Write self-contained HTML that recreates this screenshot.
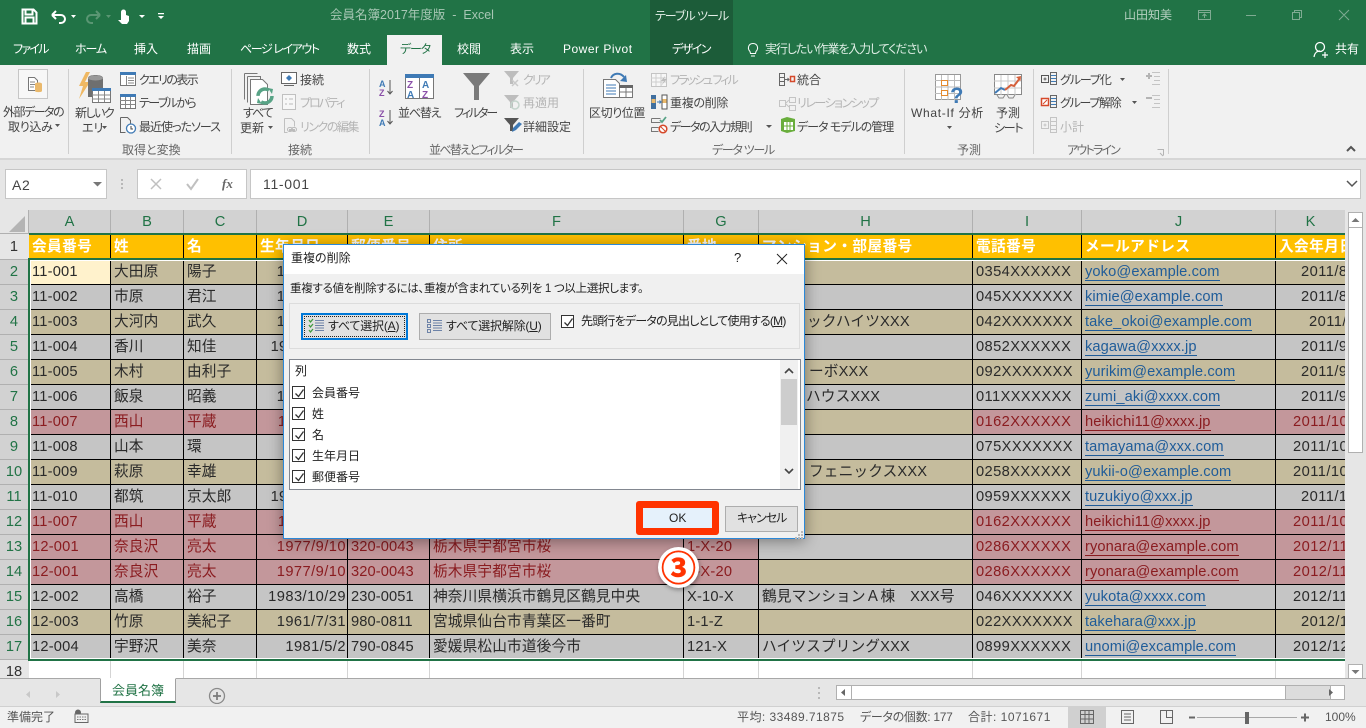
<!DOCTYPE html>
<html lang="ja"><head><meta charset="utf-8"><title>会員名簿2017年度版 - Excel</title>
<style>
*{box-sizing:border-box}
html,body{margin:0;padding:0}
body{position:relative;width:1366px;height:728px;overflow:hidden;background:#e6e6e6;font-family:"Liberation Sans","Noto Sans CJK JP",sans-serif;font-size:12px;color:#444}
.a{position:absolute}
.t{position:absolute;white-space:nowrap;line-height:16px;height:16px;font-feature-settings:"palt";font-family:"Liberation Sans","Noto Sans CJK JP",sans-serif}
.w{color:#fff}.d{color:#b4b4b4}.g2{color:#666}
.tab{color:#fff;top:41px}
.rb{color:#444}
#grid{position:absolute;left:29px;top:234px;width:1316px;height:445px;overflow:hidden;background:#fff}
table{position:absolute;left:0;top:1px;border-collapse:separate;border-spacing:0;table-layout:fixed;width:1346px;font-size:14.67px;color:#2a2a2a}
td{height:25px;padding:0 0 0 3px;border-right:1px solid #000;border-bottom:1px solid #000;white-space:nowrap;overflow:hidden;letter-spacing:.2px;line-height:24px}
td:nth-child(5){letter-spacing:.1px}
td:nth-child(9){letter-spacing:.4px}
td:nth-child(10){letter-spacing:.1px}
td:nth-child(11){letter-spacing:.45px}
tr.y td{background:#c5bc9d}tr.n td{background:#c5c5c5}
tr.h td{background:#ffc000;color:#fff;font-weight:bold;letter-spacing:.4px;padding-left:3px}
td.c{letter-spacing:.15px}
td.r{text-align:right;padding-right:1px;padding-left:0;letter-spacing:.45px}
tr td.p{background:#c3979b;color:#8a1c20}
td.l{color:#1f5c99}td.l span{border-bottom:1px solid #1f5c99}
td.p.l{color:#8a1c20}td.p.l span{border-bottom-color:#8a1c20}
tr.e td{background:#fff;border-color:#d4d4d4;height:20px}
.ch{position:absolute;top:210px;height:24px;background:#d2d2d2;border-right:1px solid #b0b0b0;color:#217346;font-size:14.67px;text-align:center;line-height:24px}
.rh{position:absolute;left:0;width:28px;height:25px;background:#d2d2d2;border-bottom:1px solid #b0b0b0;color:#217346;font-size:14.67px;text-align:center;line-height:24px}
.gl{position:absolute;background:#217346}
.wl{position:absolute;background:#fff}
#dlg{position:absolute;left:283px;top:244px;width:522px;height:295px;background:#f0f0f0;border:1px solid #2b88d8;box-shadow:0 2px 14px rgba(0,0,0,.4);color:#222}
#dlg .t{color:#222}
.cb{position:absolute;width:13px;height:13px;background:#fff;border:1px solid #333}
.cb svg{position:absolute;left:1px;top:1px}
</style></head><body>

<!-- title bar and tabs -->
<div class="a" style="left:0;top:0;width:1366px;height:65px;background:#217346"></div>
<div class="a" style="left:650px;top:0;width:83px;height:65px;background:#1c5c39"></div>
<div class="a" style="left:387px;top:35px;width:55px;height:30px;background:#f1f1f1"></div>
<div class="a" style="left:0;top:65px;width:1366px;height:93px;background:#f1f1f1"></div>
<div class="a" style="left:0;top:158px;width:1366px;height:2px;background:#d6d6d6"></div>

<span class="t" style="left:330px;top:7px;color:#a8c7b5;font-size:12.5px">会員名簿2017年度版&nbsp; -&nbsp; Excel</span>
<span class="t" style="left:655px;top:8px;color:#e4efe8;letter-spacing:-1px">テーブル ツール</span>
<span class="t" style="left:1124px;top:7px;color:#b5d0c0;font-size:12px">山田知美</span>

<span class="t tab" style="left:13px;letter-spacing:-1.7px">ファイル</span>
<span class="t tab" style="left:75px;letter-spacing:-1.1px">ホーム</span>
<span class="t tab" style="left:134px">挿入</span>
<span class="t tab" style="left:187px">描画</span>
<span class="t tab" style="left:240px;letter-spacing:-1.4px">ページ レイアウト</span>
<span class="t tab" style="left:347px">数式</span>
<span class="t tab" style="left:400px;color:#217346;letter-spacing:-1.2px">データ</span>
<span class="t tab" style="left:457px">校閲</span>
<span class="t tab" style="left:510px">表示</span>
<span class="t tab" style="left:563px;letter-spacing:.5px">Power Pivot</span>
<span class="t tab" style="left:672px;letter-spacing:-1.5px">デザイン</span>
<span class="t tab" style="left:765px;color:#dfeee5;letter-spacing:-1.1px">実行したい作業を入力してください</span>
<span class="t tab" style="left:1335px">共有</span>

<!-- ribbon labels -->
<span class="t rb" style="left:3px;top:104px;letter-spacing:-1.5px">外部データの</span>
<span class="t rb" style="left:8px;top:119px;letter-spacing:-.3px">取り込み</span>
<span class="t rb" style="left:75px;top:105px;letter-spacing:-1.5px">新しいク</span>
<span class="t rb" style="left:82px;top:120px">エリ</span>
<span class="t rb" style="left:139px;top:72px;letter-spacing:-1.6px">クエリの表示</span>
<span class="t rb" style="left:139px;top:95px;letter-spacing:-1.6px">テーブルから</span>
<span class="t rb" style="left:139px;top:119px;letter-spacing:-1px">最近使ったソース</span>
<span class="t g2" style="left:122px;top:142px">取得と変換</span>
<span class="t rb" style="left:243px;top:105px;letter-spacing:-1.1px">すべて</span>
<span class="t rb" style="left:240px;top:120px">更新</span>
<span class="t rb" style="left:300px;top:72px">接続</span>
<span class="t d" style="left:300px;top:95px;letter-spacing:-2px">プロパティ</span>
<span class="t d" style="left:300px;top:119px;letter-spacing:-1.5px">リンクの編集</span>
<span class="t g2" style="left:288px;top:142px">接続</span>
<span class="t rb" style="left:398px;top:105px;letter-spacing:-1.2px">並べ替え</span>
<span class="t rb" style="left:454px;top:105px;letter-spacing:-2.1px">フィルター</span>
<span class="t d" style="left:523px;top:72px;letter-spacing:-2px">クリア</span>
<span class="t d" style="left:523px;top:95px">再適用</span>
<span class="t rb" style="left:523px;top:119px">詳細設定</span>
<span class="t g2" style="left:429px;top:142px;letter-spacing:-1.7px">並べ替えとフィルター</span>
<span class="t rb" style="left:589px;top:105px;letter-spacing:-.4px">区切り位置</span>
<span class="t d" style="left:670px;top:72px;letter-spacing:-2px">フラッシュ フィル</span>
<span class="t rb" style="left:670px;top:95px;letter-spacing:-.3px">重複の削除</span>
<span class="t rb" style="left:670px;top:119px;letter-spacing:-1.5px">データの入力規則</span>
<span class="t rb" style="left:797px;top:72px">統合</span>
<span class="t d" style="left:797px;top:95px;letter-spacing:-1.5px">リレーションシップ</span>
<span class="t rb" style="left:797px;top:119px;letter-spacing:-1px">データ モデルの管理</span>
<span class="t g2" style="left:712px;top:142px;letter-spacing:-1.3px">データ ツール</span>
<span class="t rb" style="left:911px;top:105px;letter-spacing:.7px">What-If 分析</span>
<span class="t rb" style="left:996px;top:105px">予測</span>
<span class="t rb" style="left:994px;top:120px;letter-spacing:-1.3px">シート</span>
<span class="t g2" style="left:957px;top:142px">予測</span>
<span class="t rb" style="left:1060px;top:72px;letter-spacing:-1.1px">グループ化</span>
<span class="t rb" style="left:1060px;top:95px;letter-spacing:-1.3px">グループ解除</span>
<span class="t d" style="left:1060px;top:119px">小計</span>
<span class="t g2" style="left:1067px;top:142px;letter-spacing:-1.8px">アウトライン</span>

<!-- ribbon and title icons -->
<svg class="a" style="left:0;top:0" width="1366" height="210" viewBox="0 0 1366 210" fill="none">
<!-- qat -->
<path d="M22.5 9.5h11l3 3v11h-14zM25.500 9.500v5h7v-5M25.500 23.500v-6h8v6" stroke="#fff" stroke-width="2"/>
<path d="M52 15h9a4 4 0 0 1 0 8h-2M52 15l4-4M52 15l4 4" stroke="#fff" stroke-width="2"/>
<path d="M71 15l5 0-2.500 3z" fill="#fff"/>
<path d="M100 15h-9a4 4 0 0 0 0 8h2M100 15l-4-4M100 15l-4 4" stroke="#5a9673" stroke-width="2"/>
<path d="M106 15h5l-2.500 3z" fill="#5a9673"/>
<path d="M121 20v-8a2.500 2.500 0 0 1 5 0v3l3 1v5l-2 3h-5l-4-4z" fill="#fff"/>
<path d="M139 15h6l-3 3z" fill="#fff"/>
<path d="M158 13h6v1.300h-6zM158 16h6l-3 3z" fill="#fff"/>
<!-- window controls -->
<g stroke="#7fab92" stroke-width="1"><rect x="1198.500" y="10.500" width="12" height="9"/><path d="M1198.500 12.500h12M1204.500 18v-4M1202.500 16l2-2 2 2M1246 15.500h10M1292.500 12.500h7v7h-7zM1294.500 12.500v-2h7v7h-2M1339 10l10 10M1349 10l-10 10"/></g>
<!-- lightbulb, person -->
<path d="M751 56h4M750.500 53.500h5l.5-2c3-3 1.500-8-3-8s-6 5-3 8z" stroke="#fff"/>
<circle cx="1320" cy="47" r="4.500" stroke="#fff" stroke-width="1.300"/><path d="M1314 57c.5-4 3-6 6-6M1325 52v6M1322 55h6" stroke="#fff" stroke-width="1.200"/>
<!-- separators -->
<g fill="#cfcfcf"><rect x="68" y="69" width="1" height="85"/><rect x="231" y="69" width="1" height="85"/><rect x="369" y="69" width="1" height="85"/><rect x="583" y="69" width="1" height="85"/><rect x="904" y="69" width="1" height="85"/><rect x="1033" y="69" width="1" height="85"/><rect x="1168" y="69" width="1" height="85"/></g>
<!-- label dropdown arrows -->
<path d="M55 124h5l-2.500 3zM102 126h5l-2.500 3zM268 126h5l-2.500 3z" fill="#555"/>
<!-- external data -->
<rect x="18.500" y="69.500" width="29" height="29" fill="#f7f7f7" stroke="#c6c6c6"/>
<path d="M28.500 77.500h6l3 3v10h-9z" fill="#fff" stroke="#777"/><path d="M30 82h5M30 84.500h5M30 87h4" stroke="#888"/>
<path d="M35 84c0-2 7-2 7 0v7c0 1.500-7 1.500-7 0z" fill="#eab96c"/>
<!-- new query -->
<path d="M86 72l-7 14h4l-4 13 11-17h-5l5-10z" fill="#efb862"/>
<path d="M88 78c0-4 15-4 15 0v19H88z" fill="#6f6f6f"/><ellipse cx="95.500" cy="78" rx="7.500" ry="2.500" fill="#999"/>
<rect x="92.500" y="88.500" width="18" height="14" fill="#fff" stroke="#777"/><rect x="92" y="88" width="19" height="3" fill="#3f7ab5"/><path d="M92 95h18M92 99h18M98.500 91v11M104.500 91v11" stroke="#888"/>
<!-- query show, table -->
<rect x="120.500" y="72.500" width="15" height="13" fill="#fff" stroke="#777"/><rect x="120" y="72" width="16" height="3" fill="#3f7ab5"/><path d="M128 78h6M128 80.500h6M128 83h6M126.500 76v9" stroke="#888"/>
<rect x="120.500" y="94.500" width="15" height="14" fill="#fff" stroke="#777"/><rect x="120" y="94" width="16" height="3" fill="#3f7ab5"/><path d="M120 100.500h15M120 104.500h15M125.500 97v11M130.500 97v11" stroke="#888"/>
<path d="M120.500 117.500h7l3 3v3M120.500 117.500v15h5" stroke="#666"/><circle cx="131" cy="128.500" r="4.500" fill="#fff" stroke="#3f7ab5" stroke-width="1.300"/><path d="M131 126v3h2" stroke="#444"/>
<!-- refresh all -->
<path d="M244.500 73.500h13M244.500 73.500v26M247.500 76.500h13v26M247.500 76.500v26" stroke="#777"/>
<path d="M250.500 79.500h12l5 5v20h-17z" fill="#fff" stroke="#777"/>
<circle cx="265" cy="96" r="7" stroke="#58a386" stroke-width="3.500" stroke-dasharray="15 7"/>
<path d="M268 88l5 1-1 5zM262 104l-5-1 1-5z" fill="#58a386"/>
<!-- connections -->
<rect x="281.500" y="72.500" width="15" height="11" fill="#fff" stroke="#666"/><path d="M289 75l3 3-3 3-3-3z" fill="#3f7ab5"/><path d="M284 85.500h10" stroke="#666"/>
<rect x="282.500" y="94.500" width="13" height="15" fill="#f7f7f7" stroke="#c0c0c0"/><path d="M285 99h2M289 99h4M285 104h2M289 104h4" stroke="#bbb"/>
<path d="M284.500 118.500h7l3 3v5M284.500 118.500v14h3" stroke="#c0c0c0"/><path d="M289 130h6" stroke="#bbb" stroke-width="2"/><rect x="287.500" y="127.500" width="5" height="4" rx="2" stroke="#bbb"/><rect x="291.500" y="127.500" width="5" height="4" rx="2" stroke="#bbb"/>
<!-- sort -->
<text x="379" y="87" font-family="Liberation Sans" font-size="9" font-weight="bold" fill="#3f7ab5">A</text><text x="379" y="96" font-family="Liberation Sans" font-size="9" font-weight="bold" fill="#8a4fa8">Z</text><path d="M390 80v14M387.500 91l2.500 3 2.500-3" stroke="#555"/>
<text x="379" y="117" font-family="Liberation Sans" font-size="9" font-weight="bold" fill="#8a4fa8">Z</text><text x="379" y="126" font-family="Liberation Sans" font-size="9" font-weight="bold" fill="#3f7ab5">A</text><path d="M390 110v14M387.500 121l2.500 3 2.500-3" stroke="#555"/>
<rect x="405.500" y="74.500" width="28" height="24" fill="#fff" stroke="#777"/><rect x="405" y="74" width="29" height="4" fill="#3f7ab5"/><path d="M419.500 78v20" stroke="#777"/>
<text x="407" y="88" font-family="Liberation Sans" font-size="10" font-weight="bold" fill="#8a4fa8">Z</text><text x="407" y="98" font-family="Liberation Sans" font-size="10" font-weight="bold" fill="#3f7ab5">A</text><text x="422" y="88" font-family="Liberation Sans" font-size="10" font-weight="bold" fill="#3f7ab5">A</text><text x="422" y="98" font-family="Liberation Sans" font-size="10" font-weight="bold" fill="#8a4fa8">Z</text>
<!-- filter -->
<path d="M463 73h27l-11 13v14h-5V86z" fill="#7a7a7a"/>
<path d="M504 71h15l-6 7v6h-3v-6z" fill="#bdbdbd"/><path d="M512 80l6 6M518 80l-6 6" stroke="#c9c9c9" stroke-width="1.500"/>
<path d="M504 95h15l-6 7v6h-3v-6z" fill="#bdbdbd"/><circle cx="515" cy="105" r="4" stroke="#c4d4cc" stroke-width="1.500"/>
<path d="M504 118h15l-6 7v6h-3v-6z" fill="#555"/><path d="M512 132l1-4 6-6 3 2-6 6z" fill="#3f7ab5"/>
<!-- text to columns -->
<path d="M603.500 79.500h12l4 4v14h-16z" fill="#fff" stroke="#777"/><path d="M606 85h10M606 88h10M606 91h10M606 94h10" stroke="#3f7ab5"/>
<rect x="619.500" y="85.500" width="13" height="12" fill="#fff" stroke="#777"/><rect x="619" y="85" width="14" height="3" fill="#666"/><path d="M620 92h12M626 88v9" stroke="#777"/>
<path d="M611 78c2-5 9-6 13-1" stroke="#3f7ab5" stroke-width="2"/><path d="M620 79l7 1-1-7z" fill="#3f7ab5" transform="translate(0,2)"/>
<!-- data tools -->
<rect x="651.500" y="73.500" width="15" height="13" fill="#f7f7f7" stroke="#c4c4c4"/><path d="M651 78h15M651 82h15M656 74v12M661 74v12" stroke="#cfcfcf"/><path d="M665 76l-4 5h3l-3 5 6-7h-3z" fill="#bbb"/>
<rect x="651" y="95" width="5" height="14" fill="#3f6f9f"/><rect x="651.500" y="99" width="4" height="4" fill="#eab96c"/><rect x="662" y="95" width="5" height="14" fill="#fff" stroke="#555"/><rect x="662.500" y="99" width="4" height="4" fill="#eab96c"/><path d="M657 102h4M659.500 100.500l1.500 1.500-1.500 1.500" stroke="#3f7ab5"/>
<path d="M651.500 118.500h9M651.500 118.500v4h9M651.500 127.500h7M651.500 127.500v4h7" stroke="#777"/><path d="M660 120l2 2 4-5" stroke="#58a386" stroke-width="1.800"/><circle cx="663" cy="129" r="3.800" fill="#fff" stroke="#d5492a" stroke-width="1.500"/><path d="M660.500 126.500l5 5" stroke="#d5492a"/>
<rect x="779.500" y="73.500" width="5" height="12" stroke="#666"/><path d="M779.500 77.500h5M779.500 81.500h5M785 79.500h4M787.500 78l1.500 1.500-1.500 1.500" stroke="#666"/><rect x="790.500" y="76.500" width="4" height="5" stroke="#d5492a" stroke-width="1.500"/>
<rect x="779.500" y="100.500" width="6" height="6" stroke="#c4c4c4"/><rect x="789.500" y="97.500" width="6" height="5" stroke="#c4c4c4"/><rect x="789.500" y="105.500" width="6" height="5" stroke="#c4c4c4"/><path d="M786 103l3-3M786 104l3 3" stroke="#c4c4c4"/>
<path d="M781 119l6-2 8 2v12l-8 2-6-2z" fill="#69ae3c"/><rect x="784" y="122" width="9" height="8" fill="#fff"/><path d="M787 122v8M790 122v8M784 126h9" stroke="#69ae3c"/>
<path d="M766 125h6l-3 3z" fill="#555"/>
<!-- what-if -->
<rect x="935.500" y="74.500" width="25" height="25" fill="#fff" stroke="#999"/><path d="M935 80.500h25M935 87h25M935 93.500h25M941.500 75v25M948 75v25M954.500 75v25" stroke="#bbb"/>
<rect x="941.500" y="80.500" width="6" height="5" fill="#fff" stroke="#e58a2e"/><rect x="941.500" y="90.500" width="6" height="5" fill="#fff" stroke="#e58a2e"/>
<text x="950" y="103" font-family="Liberation Sans" font-size="22" font-weight="bold" fill="#3f7ab5">?</text>
<path d="M947 126h5l-2.500 3z" fill="#555"/>
<!-- forecast -->
<rect x="994.500" y="74.500" width="27" height="20" fill="#fff" stroke="#888"/><path d="M994 81h27M994 88h27M1001 75v20M1008 75v20M1015 75v20" stroke="#c8c8c8"/>
<path d="M995 93l6-5 4 2" stroke="#3f7ab5" stroke-width="2"/><path d="M1005 90l6-5 3 1 6-8" stroke="#d5603c" stroke-width="2"/><path d="M1016 77l5-1-.5 5z" fill="#d5603c"/>
<path d="M997 95l2 3h4l2-3M1007 95l2 3h4l2-3" stroke="#888"/>
<!-- outline -->
<rect x="1041.500" y="75.500" width="7" height="7" stroke="#555"/><path d="M1043.500 79h3M1045 77.500v3" stroke="#555"/><rect x="1050.500" y="72.500" width="6" height="12" stroke="#666"/><path d="M1051 75.500h5M1051 78.500h5M1051 81.500h5" stroke="#3f7ab5"/>
<path d="M1120 78h5l-2.500 3z" fill="#555"/>
<rect x="1041.500" y="98.500" width="7" height="7" fill="#fff" stroke="#d5492a" stroke-width="1.500"/><path d="M1043 104l4-4" stroke="#d5492a"/><rect x="1050.500" y="95.500" width="6" height="12" stroke="#666"/><path d="M1051 98.500h5M1051 101.500h5M1051 104.500h5" stroke="#3f7ab5"/>
<path d="M1132 101h5l-2.500 3z" fill="#555"/>
<rect x="1041.500" y="121.500" width="7" height="7" stroke="#c4c4c4"/><path d="M1043.500 125h3M1045 123.500v3" stroke="#c4c4c4"/><rect x="1050.500" y="117.500" width="6" height="15" stroke="#c4c4c4"/><path d="M1050 121.500h7M1050 125.500h7M1050 129.500h7" stroke="#c4c4c4"/>
<path d="M1146 76h6M1149 73v6" stroke="#b4b4b4" stroke-width="2"/><path d="M1152 72.500h8M1154 76.500h6M1154 80.500h6M1152 84.500h8" stroke="#c4c4c4"/>
<path d="M1146 98h6" stroke="#b4b4b4" stroke-width="2"/><path d="M1152 95.500h8M1154 99.500h6M1154 103.500h6M1152 107.500h8" stroke="#c4c4c4"/>
<path d="M1157.500 149.500h6v6M1160 153l3 3" stroke="#b4b4b4"/>
<path d="M1347 151l4-4 4 4" stroke="#555" stroke-width="2"/>
<!-- small dropdown-free formula bar glyphs -->
<path d="M93 182h9l-4.500 4.500z" fill="#777"/>
<path d="M121 179h2v2h-2zM121 183h2v2h-2zM121 187h2v2h-2z" fill="#b8b8b8"/>
<path d="M151 179l10 10M161 179l-10 10" stroke="#c0c0c0" stroke-width="1.500"/>
<path d="M187 184l4 5 7-10" stroke="#c0c0c0" stroke-width="2"/>
</svg>

<!-- formula bar -->
<div class="a" style="left:5px;top:169px;width:102px;height:30px;background:#fff;border:1px solid #c6c6c6;z-index:-1"></div>
<span class="t" style="left:12px;top:177px;font-size:14px;color:#444;letter-spacing:.6px">A2</span>
<div class="a" style="left:137px;top:169px;width:110px;height:30px;background:#fff;border:1px solid #c6c6c6;z-index:-1"></div>
<span class="t" style="left:222px;top:176px;font-family:'Liberation Serif',serif;font-style:italic;font-weight:bold;font-size:13px;color:#666">fx</span>
<div class="a" style="left:250px;top:169px;width:1111px;height:30px;background:#fff;border:1px solid #c6c6c6;z-index:-1"></div>
<span class="t" style="left:263px;top:176px;font-size:14px;color:#444;letter-spacing:.7px">11-001</span>
<svg class="a" style="left:1346px;top:180px" width="12" height="8"><path d="M1 1l5 5 5-5" stroke="#555" stroke-width="1.500" fill="none"/></svg>

<!-- corner and column headers -->
<div class="a" style="left:0;top:210px;width:29px;height:24px;background:#e6e6e6;border-right:1px solid #b0b0b0;border-bottom:1px solid #b0b0b0"></div>
<svg class="a" style="left:8px;top:215px" width="18" height="18"><path d="M17 1v16H1z" fill="#b4b4b4"/></svg>
<div class="ch" style="left:29px;width:82px">A</div>
<div class="ch" style="left:111px;width:73px">B</div>
<div class="ch" style="left:184px;width:73px">C</div>
<div class="ch" style="left:257px;width:91px">D</div>
<div class="ch" style="left:348px;width:82px">E</div>
<div class="ch" style="left:430px;width:254px">F</div>
<div class="ch" style="left:684px;width:75px">G</div>
<div class="ch" style="left:759px;width:214px">H</div>
<div class="ch" style="left:973px;width:109px">I</div>
<div class="ch" style="left:1082px;width:194px">J</div>
<div class="ch" style="left:1276px;width:70px">K</div>

<!-- row headers -->
<div class="rh" style="top:235px;background:#e6e6e6;color:#333">1</div>
<div class="rh" style="top:260px">2</div>
<div class="rh" style="top:285px">3</div>
<div class="rh" style="top:310px">4</div>
<div class="rh" style="top:335px">5</div>
<div class="rh" style="top:360px">6</div>
<div class="rh" style="top:385px">7</div>
<div class="rh" style="top:410px">8</div>
<div class="rh" style="top:435px">9</div>
<div class="rh" style="top:460px">10</div>
<div class="rh" style="top:485px">11</div>
<div class="rh" style="top:510px">12</div>
<div class="rh" style="top:535px">13</div>
<div class="rh" style="top:560px">14</div>
<div class="rh" style="top:585px">15</div>
<div class="rh" style="top:610px">16</div>
<div class="rh" style="top:635px">17</div>
<div class="rh" style="top:660px;height:19px;background:#e6e6e6;color:#333;border:0">18</div>

<!-- sheet -->
<div id="grid">
<table>
<colgroup><col style="width:82px"><col style="width:73px"><col style="width:73px"><col style="width:91px"><col style="width:82px"><col style="width:254px"><col style="width:75px"><col style="width:214px"><col style="width:109px"><col style="width:194px"><col style="width:99px"></colgroup>
<tr class="h"><td>会員番号</td><td>姓</td><td>名</td><td>生年月日</td><td>郵便番号</td><td>住所</td><td>番地</td><td>マンション・部屋番号</td><td>電話番号</td><td>メールアドレス</td><td>入会年月日</td></tr>
<tr class="y"><td style="background:#fff2cc">11-001</td><td class="c">大田原</td><td class="c">陽子</td><td class="r">1972/4/12</td><td></td><td></td><td></td><td></td><td>0354XXXXXX</td><td class="l"><span>yoko@example.com</span></td><td style="padding-left:25px">2011/8/15</td></tr>
<tr class="n"><td>11-002</td><td class="c">市原</td><td class="c">君江</td><td class="r">1968/3/25</td><td></td><td></td><td></td><td></td><td>045XXXXXXX</td><td class="l"><span>kimie@example.com</span></td><td style="padding-left:25px">2011/8/20</td></tr>
<tr class="y"><td>11-003</td><td class="c">大河内</td><td class="c">武久</td><td class="r">1975/6/18</td><td></td><td></td><td></td><td style="padding-left:48px" class="c">ックハイツXXX</td><td>042XXXXXXX</td><td class="l"><span>take_okoi@example.com</span></td><td style="padding-left:33px">2011/9/1</td></tr>
<tr class="n"><td>11-004</td><td class="c">香川</td><td class="c">知佳</td><td style="padding-left:0;text-indent:-1px;padding-right:1px;text-align:right">1980/10/22</td><td></td><td></td><td></td><td></td><td>0852XXXXXX</td><td class="l"><span>kagawa@xxxx.jp</span></td><td style="padding-left:25px">2011/9/10</td></tr>
<tr class="y"><td>11-005</td><td class="c">木村</td><td class="c">由利子</td><td></td><td></td><td></td><td></td><td style="padding-left:50px" class="c">ーボXXX</td><td>092XXXXXXX</td><td class="l"><span>yurikim@example.com</span></td><td style="padding-left:25px">2011/9/15</td></tr>
<tr class="n"><td>11-006</td><td class="c">飯泉</td><td class="c">昭義</td><td class="r">1966/5/30</td><td></td><td></td><td></td><td style="padding-left:47px" class="c">ハウスXXX</td><td>011XXXXXXX</td><td class="l"><span>zumi_aki@xxxx.com</span></td><td style="padding-left:25px">2011/9/20</td></tr>
<tr class="y"><td class="p">11-007</td><td class="p c">西山</td><td class="p c">平蔵</td><td class="p r">1958/2/11</td><td class="p"></td><td class="p"></td><td class="p"></td><td></td><td class="p">0162XXXXXX</td><td class="p l"><span>heikichi11@xxxx.jp</span></td><td class="p" style="padding-left:17px">2011/10/1</td></tr>
<tr class="n"><td>11-008</td><td class="c">山本</td><td class="c">環</td><td class="r">1970/7/7</td><td></td><td></td><td></td><td></td><td>075XXXXXXX</td><td class="l"><span>tamayama@xxx.com</span></td><td style="padding-left:17px">2011/10/5</td></tr>
<tr class="y"><td>11-009</td><td class="c">萩原</td><td class="c">幸雄</td><td class="r">1963/9/9</td><td></td><td></td><td></td><td style="padding-left:50px" class="c">フェニックスXXX</td><td>0258XXXXXX</td><td class="l"><span>yukii-o@example.com</span></td><td style="padding-left:17px">2011/10/9</td></tr>
<tr class="n"><td>11-010</td><td class="c">都筑</td><td class="c">京太郎</td><td style="padding-left:0;padding-right:1px;text-align:right">1985/12/14</td><td></td><td></td><td></td><td></td><td>0959XXXXXX</td><td class="l"><span>tuzukiyo@xxx.jp</span></td><td style="padding-left:25px">2011/11/1</td></tr>
<tr class="y"><td class="p">11-007</td><td class="p c">西山</td><td class="p c">平蔵</td><td class="p r">1958/2/11</td><td class="p"></td><td class="p"></td><td class="p"></td><td></td><td class="p">0162XXXXXX</td><td class="p l"><span>heikichi11@xxxx.jp</span></td><td class="p" style="padding-left:17px">2011/10/1</td></tr>
<tr class="n"><td class="p">12-001</td><td class="p c">奈良沢</td><td class="p c">亮太</td><td class="p r">1977/9/10</td><td class="p">320-0043</td><td class="p c">栃木県宇都宮市桜</td><td class="p">1-X-20</td><td></td><td class="p">0286XXXXXX</td><td class="p l"><span>ryonara@example.com</span></td><td class="p" style="padding-left:17px">2012/11/1</td></tr>
<tr class="y"><td class="p">12-001</td><td class="p c">奈良沢</td><td class="p c">亮太</td><td class="p r">1977/9/10</td><td class="p">320-0043</td><td class="p c">栃木県宇都宮市桜</td><td class="p">1-X-20</td><td></td><td class="p">0286XXXXXX</td><td class="p l"><span>ryonara@example.com</span></td><td class="p" style="padding-left:17px">2012/11/1</td></tr>
<tr class="n"><td>12-002</td><td class="c">高橋</td><td class="c">裕子</td><td class="r">1983/10/29</td><td>230-0051</td><td class="c">神奈川県横浜市鶴見区鶴見中央</td><td>X-10-X</td><td class="c">鶴見マンションＡ棟　XXX号</td><td>046XXXXXXX</td><td class="l"><span>yukota@xxxx.com</span></td><td style="padding-left:17px">2012/11/5</td></tr>
<tr class="y"><td>12-003</td><td class="c">竹原</td><td class="c">美紀子</td><td class="r">1961/7/31</td><td>980-0811</td><td class="c">宮城県仙台市青葉区一番町</td><td>1-1-Z</td><td></td><td>022XXXXXXX</td><td class="l"><span>takehara@xxx.jp</span></td><td style="padding-left:25px">2012/12/1</td></tr>
<tr class="n"><td>12-004</td><td class="c">宇野沢</td><td class="c">美奈</td><td class="r">1981/5/2</td><td>790-0845</td><td class="c">愛媛県松山市道後今市</td><td>121-X</td><td class="c">ハイツスプリングXXX</td><td>0899XXXXXX</td><td class="l"><span>unomi@excample.com</span></td><td style="padding-left:17px">2012/12/5</td></tr>
<tr class="e"><td></td><td></td><td></td><td></td><td></td><td></td><td></td><td></td><td></td><td></td><td></td></tr>
</table>
</div>
<!-- table selection lines -->
<div class="wl" style="left:30px;top:260px;width:1315px;height:1px"></div>
<div class="wl" style="left:30px;top:260px;width:1px;height:398px"></div>
<div class="wl" style="left:30px;top:658px;width:1315px;height:1px"></div>
<div class="gl" style="left:29px;top:233px;width:1316px;height:2px"></div>
<div class="gl" style="left:28px;top:258px;width:1317px;height:2px"></div>
<div class="gl" style="left:28px;top:258px;width:2px;height:403px"></div>
<div class="gl" style="left:28px;top:659px;width:1317px;height:2px"></div>

<!-- vertical scrollbar -->
<div class="a" style="left:1345px;top:210px;width:21px;height:469px;background:#e6e6e6"></div>
<div class="a" style="left:1348px;top:212px;width:15px;height:16px;background:#fff;border:1px solid #b0b0b0"></div>
<svg class="a" style="left:1351px;top:217px" width="9" height="6"><path d="M4.500 1l4 4h-8z" fill="#777"/></svg>
<div class="a" style="left:1348px;top:227px;width:15px;height:226px;background:#fff;border:1px solid #b0b0b0"></div>
<div class="a" style="left:1348px;top:664px;width:15px;height:15px;background:#fff;border:1px solid #b0b0b0"></div>
<svg class="a" style="left:1351px;top:669px" width="9" height="6"><path d="M4.500 5l4-4h-8z" fill="#777"/></svg>

<!-- sheet tabs bar -->
<div class="a" style="left:0;top:678px;width:1366px;height:28px;background:#e6e6e6;border-top:1px solid #a8a8a8"></div>
<div class="a" style="left:100px;top:678px;width:76px;height:25px;background:#fff;border:1px solid #a0a0a0;border-top-color:#fff;border-bottom:2px solid #217346"></div>
<span class="t" style="left:112px;top:683px;color:#217346;font-size:13px">会員名簿</span>
<svg class="a" style="left:20px;top:684px" width="220" height="20" fill="none"><path d="M10 7v7l-4-3.500zM36 7v7l4-3.500z" fill="#c8c8c8"/><circle cx="197" cy="12" r="7.500" stroke="#8a8a8a" stroke-width="1.300"/><path d="M197 8v8M193 12h8" stroke="#7a7a7a" stroke-width="1.700"/></svg>
<svg class="a" style="left:818px;top:686px" width="4" height="14"><path d="M0 1h2v2H0zM0 6h2v2H0zM0 11h2v2H0z" fill="#b8b8b8"/></svg>
<div class="a" style="left:836px;top:685px;width:509px;height:15px;background:#dcdcdc;border:1px solid #b0b0b0"></div>
<div class="a" style="left:836px;top:685px;width:16px;height:15px;background:#fff;border:1px solid #b0b0b0"></div>
<div class="a" style="left:851px;top:685px;width:435px;height:15px;background:#fff;border:1px solid #b0b0b0"></div>
<div class="a" style="left:1330px;top:685px;width:15px;height:15px;background:#fff;border:1px solid #b0b0b0"></div>
<svg class="a" style="left:836px;top:685px" width="510" height="15"><path d="M9 4v7l-4-3.500zM493 4v7l4-3.500z" fill="#666"/></svg>

<!-- status bar -->
<div class="a" style="left:0;top:706px;width:1366px;height:22px;background:#f1f1f1;border-top:1px solid #d0d0d0"></div>
<span class="t" style="left:7px;top:709px;color:#555">準備完了</span>
<svg class="a" style="left:74px;top:709px" width="16" height="15" fill="none"><circle cx="4" cy="3.500" r="3" fill="#666"/><rect x="1" y="5" width="13" height="8.500" fill="#f1f1f1" stroke="#666"/><path d="M3 8h9M3 10.500h9" stroke="#777" stroke-dasharray="1.500 1"/></svg>
<span class="t" style="left:737px;top:709px;color:#555;letter-spacing:.45px">平均: 33489.71875</span>
<span class="t" style="left:860px;top:709px;color:#555;letter-spacing:-.3px">データの個数: 177</span>
<span class="t" style="left:968px;top:709px;color:#555;letter-spacing:.5px">合計: 1071671</span>
<div class="a" style="left:1068px;top:707px;width:38px;height:21px;background:#d0d0d0"></div>
<svg class="a" style="left:1075px;top:707px" width="130" height="21" fill="none" stroke="#666"><path d="M5.500 3.500h13v13h-13zM5.500 7.500h13M5.500 12h13M10 3.500v13M14 3.500v13"/><path d="M46.500 3.500h12v13h-12zM49 7h7M49 10h7M49 13h7"/><path d="M85.500 3.500h12v13h-12zM91.500 3.500v7h6"/></svg>
<svg class="a" style="left:1185px;top:707px" width="130" height="21" fill="none"><path d="M4 10.500h6M116 10.500h8M120 6.500v8" stroke="#666" stroke-width="2"/><path d="M12 10.500h100" stroke="#a8a8a8"/><rect x="60" y="5" width="4" height="12" fill="#666"/></svg>
<span class="t" style="left:1325px;top:709px;color:#555">100%</span>

<!-- dialog -->
<div id="dlg">
<div class="a" style="left:0;top:0;width:520px;height:29px;background:#fff"></div>
<span class="t" style="left:7px;top:5px">重複の削除</span>
<span class="t" style="left:450px;top:5px;font-size:13px">?</span>
<svg class="a" style="left:492px;top:8px" width="12" height="12"><path d="M1 1l10 10M11 1L1 11" stroke="#222" fill="none"/></svg>
<span class="t" style="left:6px;top:36px;font-size:11.5px;letter-spacing:-.3px">重複する値を削除するには、重複が含まれている列を 1 つ以上選択します。</span>
<div class="a" style="left:5px;top:58px;width:511px;height:46px;border:1px solid #dcdcdc"></div>

<div class="a" style="left:17px;top:68px;width:107px;height:27px;background:#e1e1e1;border:2px solid #0078d7"><div class="a" style="left:1px;top:1px;right:1px;bottom:1px;border:1px dotted #222"></div></div>
<svg class="a" style="left:24px;top:73px" width="18" height="16" fill="none"><path d="M1 2l1.500 2 2.500-3M1 7l1.500 2 2.500-3M1 12l1.500 2 2.500-3" stroke="#3f9a3f" stroke-width="1.300"/><path d="M7 2.500h9M7 5h9M7 7.500h9M7 10h9M7 12.500h9" stroke="#6d83a8"/></svg>
<span class="t" style="left:44px;top:73px;letter-spacing:-.2px">すべて選択(<u>A</u>)</span>

<div class="a" style="left:135px;top:68px;width:132px;height:27px;background:#e1e1e1;border:1px solid #adadad"></div>
<svg class="a" style="left:142px;top:73px" width="18" height="16" fill="none"><path d="M1.500 1.500h3v3h-3zM1.500 6.500h3v3h-3zM1.500 11.500h3v3h-3z" stroke="#6d83a8"/><path d="M7 2.500h9M7 5h9M7 7.500h9M7 10h9M7 12.500h9" stroke="#6d83a8"/></svg>
<span class="t" style="left:162px;top:73px;letter-spacing:-.2px">すべて選択解除(<u>U</u>)</span>

<div class="cb" style="left:277px;top:70px"><svg width="11" height="11" fill="none"><path d="M1.500 5.500l3 3 5-7" stroke="#333" stroke-width="1.300"/></svg></div>
<span class="t" style="left:297px;top:68px;letter-spacing:-.8px">先頭行をデータの見出しとして使用する(<u>M</u>)</span>

<div class="a" style="left:5px;top:114px;width:512px;height:131px;background:#fff;border:1px solid #828790"></div>
<span class="t" style="left:11px;top:118px">列</span>
<div class="a" style="left:496px;top:115px;width:18px;height:129px;background:#f0f0f0"></div>
<div class="a" style="left:497px;top:134px;width:16px;height:46px;background:#cdcdcd"></div>
<svg class="a" style="left:500px;top:122px" width="10" height="110" fill="none"><path d="M1 6l4-4 4 4" stroke="#444" stroke-width="1.600"/><path d="M1 102l4 4 4-4" stroke="#444" stroke-width="1.600"/></svg>

<div class="cb" style="left:8px;top:141px"><svg width="11" height="11" fill="none"><path d="M1.500 5.500l3 3 5-7" stroke="#333" stroke-width="1.300"/></svg></div>
<span class="t" style="left:28px;top:140px">会員番号</span>
<div class="cb" style="left:8px;top:162px"><svg width="11" height="11" fill="none"><path d="M1.500 5.500l3 3 5-7" stroke="#333" stroke-width="1.300"/></svg></div>
<span class="t" style="left:28px;top:161px">姓</span>
<div class="cb" style="left:8px;top:183px"><svg width="11" height="11" fill="none"><path d="M1.500 5.500l3 3 5-7" stroke="#333" stroke-width="1.300"/></svg></div>
<span class="t" style="left:28px;top:182px">名</span>
<div class="cb" style="left:8px;top:204px"><svg width="11" height="11" fill="none"><path d="M1.500 5.500l3 3 5-7" stroke="#333" stroke-width="1.300"/></svg></div>
<span class="t" style="left:28px;top:203px">生年月日</span>
<div class="cb" style="left:8px;top:225px"><svg width="11" height="11" fill="none"><path d="M1.500 5.500l3 3 5-7" stroke="#333" stroke-width="1.300"/></svg></div>
<span class="t" style="left:28px;top:224px">郵便番号</span>

<div class="a" style="left:352px;top:256px;width:83px;height:34px;background:#e5f1fb;border:7px solid #ff3300;border-radius:3px"></div>
<span class="t" style="left:385px;top:265px;font-size:12px">OK</span>
<div class="a" style="left:441px;top:261px;width:73px;height:26px;background:#e1e1e1;border:1px solid #adadad"></div>
<span class="t" style="left:453px;top:265px;letter-spacing:-1px">キャンセル</span>
<svg class="a" style="left:510px;top:285px" width="10" height="9"><path d="M7 1h2v2H7zM4 4h2v2H4zM7 4h2v2H7zM1 7h2v2H1zM4 7h2v2H4zM7 7h2v2H7z" fill="#b8b8b8"/></svg>
</div>

<!-- step badge -->
<div class="a" style="left:658px;top:547px;width:41px;height:41px;border-radius:50%;background:#fff;box-shadow:1px 2px 4px rgba(0,0,0,.35)"></div>
<span class="a" style="left:658px;top:547px;width:41px;height:41px;text-align:center;line-height:40px;font-size:35px;font-weight:bold;color:#ff3300;font-family:'Noto Sans CJK JP',sans-serif;-webkit-text-stroke:.5px #ff3300">③</span>
</body></html>
